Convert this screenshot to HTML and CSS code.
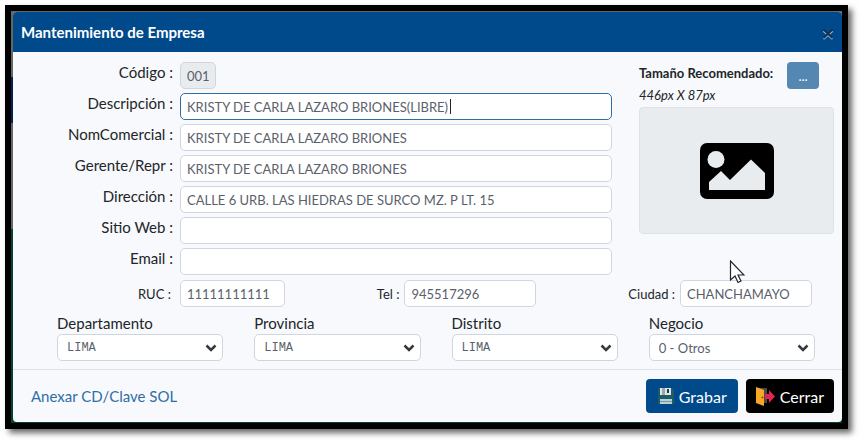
FILE: index.html
```html
<!DOCTYPE html>
<html lang="es">
<head>
    <meta charset="UTF-8">
    <meta name="viewport" content="width=device-width, initial-scale=1.0">
    <title>Mantenimiento de Empresa</title>
    <link rel="stylesheet" href="styles.css">
</head>
<body>
    <div class="frame">
        <form class="modal">
            <header class="modal-header">
                <h1>Mantenimiento de Empresa</h1>
                <button type="button" class="close" aria-label="Cerrar ventana">
                    <svg width="12" height="12" viewBox="0 0 12 12"><path d="M1.5 3l9 8M10.500 3l-9 8" stroke="#8fb0cd" stroke-width="2"/><path d="M1.5 1.5l9 8.500M10.500 1.5l-9 8.500" stroke="#12304d" stroke-width="1.8"/></svg>
                </button>
            </header>

            <div class="modal-body">
                <div class="main-area">
                    <div class="fields">
                        <div class="row">
                            <label for="codigo">Código :</label>
                            <input id="codigo" class="control code" type="text" value="001" readonly>
                        </div>
                        <div class="row">
                            <label for="descripcion">Descripción :</label>
                            <div class="control-wrap">
                                <input id="descripcion" class="control active" type="text" value="KRISTY DE CARLA LAZARO BRIONES(LIBRE)">
                                <span class="caret"></span>
                            </div>
                        </div>
                        <div class="row">
                            <label for="comercial">NomComercial :</label>
                            <input id="comercial" class="control" type="text" value="KRISTY DE CARLA LAZARO BRIONES">
                        </div>
                        <div class="row">
                            <label for="gerente">Gerente/Repr :</label>
                            <input id="gerente" class="control" type="text" value="KRISTY DE CARLA LAZARO BRIONES">
                        </div>
                        <div class="row">
                            <label for="direccion">Dirección :</label>
                            <input id="direccion" class="control" type="text" value="CALLE 6 URB. LAS HIEDRAS DE SURCO MZ. P LT. 15">
                        </div>
                        <div class="row">
                            <label for="web">Sitio Web :</label>
                            <input id="web" class="control" type="text">
                        </div>
                        <div class="row">
                            <label for="email">Email :</label>
                            <input id="email" class="control" type="text">
                        </div>
                    </div>

                    <div class="logo-area">
                        <div class="logo-head">
                            <p><strong>Tamaño Recomendado:</strong><em>446px X 87px</em></p>
                            <button type="button" class="browse">...</button>
                        </div>
                        <div class="logo-preview">
                            <svg width="74" height="56" viewBox="0 0 74 56">
                                <rect width="74" height="56" rx="7"/>
                                <circle cx="16" cy="16.5" r="8.5" fill="#e9ecef"/>
                                <path d="M9 47V39L21 28L30 37L51 16.5L65 30V47z" fill="#e9ecef"/>
                            </svg>
                        </div>
                    </div>
                </div>

                <div class="contact">
                    <div class="contact-item ruc">
                        <label for="ruc">RUC :</label>
                        <input id="ruc" class="control" type="text" value="11111111111">
                    </div>
                    <div class="contact-item tel">
                        <label for="tel">Tel :</label>
                        <input id="tel" class="control" type="text" value="945517296">
                    </div>
                    <div class="contact-item ciudad">
                        <label for="ciudad">Ciudad :</label>
                        <input id="ciudad" class="control" type="text" value="CHANCHAMAYO">
                    </div>
                </div>

                <div class="places">
                    <div class="place">
                        <label for="departamento">Departamento</label>
                        <select id="departamento" class="control mono"><option>LIMA</option></select>
                    </div>
                    <div class="place">
                        <label for="provincia">Provincia</label>
                        <select id="provincia" class="control mono"><option>LIMA</option></select>
                    </div>
                    <div class="place">
                        <label for="distrito">Distrito</label>
                        <select id="distrito" class="control mono"><option>LIMA</option></select>
                    </div>
                    <div class="place">
                        <label for="negocio">Negocio</label>
                        <select id="negocio" class="control"><option>0 - Otros</option></select>
                    </div>
                </div>
            </div>

            <footer class="modal-footer">
                <a href="#">Anexar CD/Clave SOL</a>
                <div class="actions">
                    <button type="submit" class="btn btn-save">
                        <svg width="17" height="18" viewBox="0 0 17 18">
                            <path d="M1 1h14l2 2v14H1z" fill="#1d5b66"/>
                            <path d="M3 1h11v7H3z" fill="#dfe6ea"/>
                            <path d="M5 1h3v7H5z" fill="#9aa7ae"/>
                            <path d="M10 2h2v4h-2z" fill="#243b46"/>
                            <path d="M3 12h12v5H3z" fill="#b9d0d4"/>
                            <path d="M3 14h12v1H3z" fill="#7b979d"/>
                        </svg>
                        Grabar
                    </button>
                    <button type="button" class="btn btn-close">
                        <svg width="19" height="19" viewBox="0 0 19 19">
                            <path d="M1 1h10v15H1z" fill="#4a4a4a"/>
                            <path d="M0 0l8 3v16l-8-3z" fill="#f9a825"/>
                            <circle cx="6.5" cy="10.5" r="1" fill="#7a4a00"/>
                            <path d="M9 7h4V3l6 6.5l-6 6.5v-4H9z" fill="#e0264f"/>
                        </svg>
                        Cerrar
                    </button>
                </div>
            </footer>
        </form>
        <svg class="pointer" width="16" height="24" viewBox="0 0 16 24"><path d="M1.5 1v19l4.5-4l3 6.5l3-1.5l-3-6h6z" fill="#fff" stroke="#23232f" stroke-width="1.2"/></svg>
    </div>
</body>
</html>
```
FILE: styles.css
```css
* {
    box-sizing: border-box;
}

body {
    margin: 0;
    padding: 5px 13px 13px 5px;
    background: #fff;
    color: #212529;
    font-family: Lato, "Liberation Sans", sans-serif;
    font-size: 15px;
}

.frame {
    position: relative;
    border: 6px solid #000;
    padding: 1px 0 1px 2px;
    background: linear-gradient(#666 0 66px, #00234a 66px 112px, #666 112px 218px, #00452f 218px);
    box-shadow: 4px 4px 6px rgba(0, 0, 0, 0.6);
}

.modal {
    background: #f8f9fc;
    border-radius: 4px;
    overflow: hidden;
}

.modal-header {
    display: flex;
    justify-content: space-between;
    align-items: center;
    height: 40px;
    padding: 0 8px;
    background: #004a8c;
    color: #fff;
}

.modal-header h1 {
    margin: 0;
    font-size: 15px;
    font-weight: 700;
}

.close {
    display: flex;
    padding: 4px 0 0;
    border: 0;
    background: none;
}

.modal-body {
    padding: 10px 8px 8px 0;
}

.main-area {
    display: grid;
    grid-template-columns: 1fr 195px;
    column-gap: 27px;
}

.fields {
    display: flex;
    flex-direction: column;
    gap: 4px;
}

.row {
    display: flex;
    gap: 7px;
}

.row label {
    width: 160px;
    line-height: 20px;
    text-align: right;
}

.control {
    flex: 1;
    min-width: 0;
    height: 27px;
    padding: 0 6px;
    border: 1px solid #d1d5e0;
    border-radius: 5px;
    background: #fff;
    color: #5a5f6b;
    font-family: inherit;
    font-size: 13px;
}

.control.code {
    flex: 0 0 36px;
    background: #e9ecef;
}

.control.active {
    border-color: #2f6ea5;
}

.control-wrap {
    position: relative;
    display: flex;
    flex: 1;
}

.caret {
    position: absolute;
    left: 270px;
    top: 6px;
    width: 1px;
    height: 15px;
    background: #222;
}

.logo-head {
    display: flex;
    justify-content: space-between;
    height: 45px;
    padding-right: 15px;
}

.logo-head p {
    margin: 0;
    font-size: 13px;
    line-height: 22px;
}

.logo-head strong,
.logo-head em {
    display: block;
}

.browse {
    width: 32px;
    height: 27px;
    padding: 0;
    border: 0;
    border-radius: 4px;
    background: #5587b3;
    color: #fff;
    font-family: inherit;
    font-size: 13px;
}

.logo-preview {
    display: flex;
    align-items: center;
    justify-content: center;
    height: 127px;
    border: 1px solid #dee2e6;
    border-radius: 4px;
    background: #e9ecef;
}

.contact {
    display: flex;
    justify-content: space-between;
    margin-top: 5px;
    padding: 0 22px 0 125px;
    font-size: 13px;
}

.contact-item {
    display: flex;
    align-items: center;
    gap: 5px;
}

.contact-item .control {
    flex: none;
    width: 132px;
}

.contact-item.ruc {
    gap: 9px;
}

.contact-item.ruc .control {
    width: 105px;
}

.places {
    display: grid;
    grid-template-columns: repeat(4, 1fr);
    gap: 31px;
    margin-top: 6px;
    padding: 0 19px 0 44px;
}

.place label {
    display: block;
    line-height: 20px;
}

.place .control {
    width: 100%;
    margin-top: 1px;
    padding: 0 24px 0 9px;
    appearance: none;
    background: #fff url("data:image/svg+xml,%3Csvg xmlns='http://www.w3.org/2000/svg' width='12' height='8'%3E%3Cpath d='M1.5 1.5l4.5 4.5l4.5-4.5' fill='none' stroke='%23343a40' stroke-width='2.5'/%3E%3C/svg%3E") no-repeat right 5px center;
}

.place .mono {
    font-family: "Liberation Mono", monospace;
    font-size: 12px;
}

.modal-footer {
    display: flex;
    justify-content: space-between;
    align-items: center;
    height: 53px;
    padding: 0 8px 0 18px;
    border-top: 1px solid #dee2e6;
}

.modal-footer a {
    color: #2f6ea5;
    text-decoration: none;
}

.actions {
    display: flex;
    gap: 8px;
}

.btn {
    display: flex;
    align-items: center;
    gap: 5px;
    height: 34px;
    padding: 0 11px;
    border: 0;
    border-radius: 4px;
    color: #fff;
    font-family: inherit;
    font-size: 16px;
}

.btn-save {
    background: #004a8c;
}

.btn-close {
    padding: 0 10px;
    background: #000;
}

.pointer {
    position: absolute;
    left: 718px;
    top: 249px;
}
```
